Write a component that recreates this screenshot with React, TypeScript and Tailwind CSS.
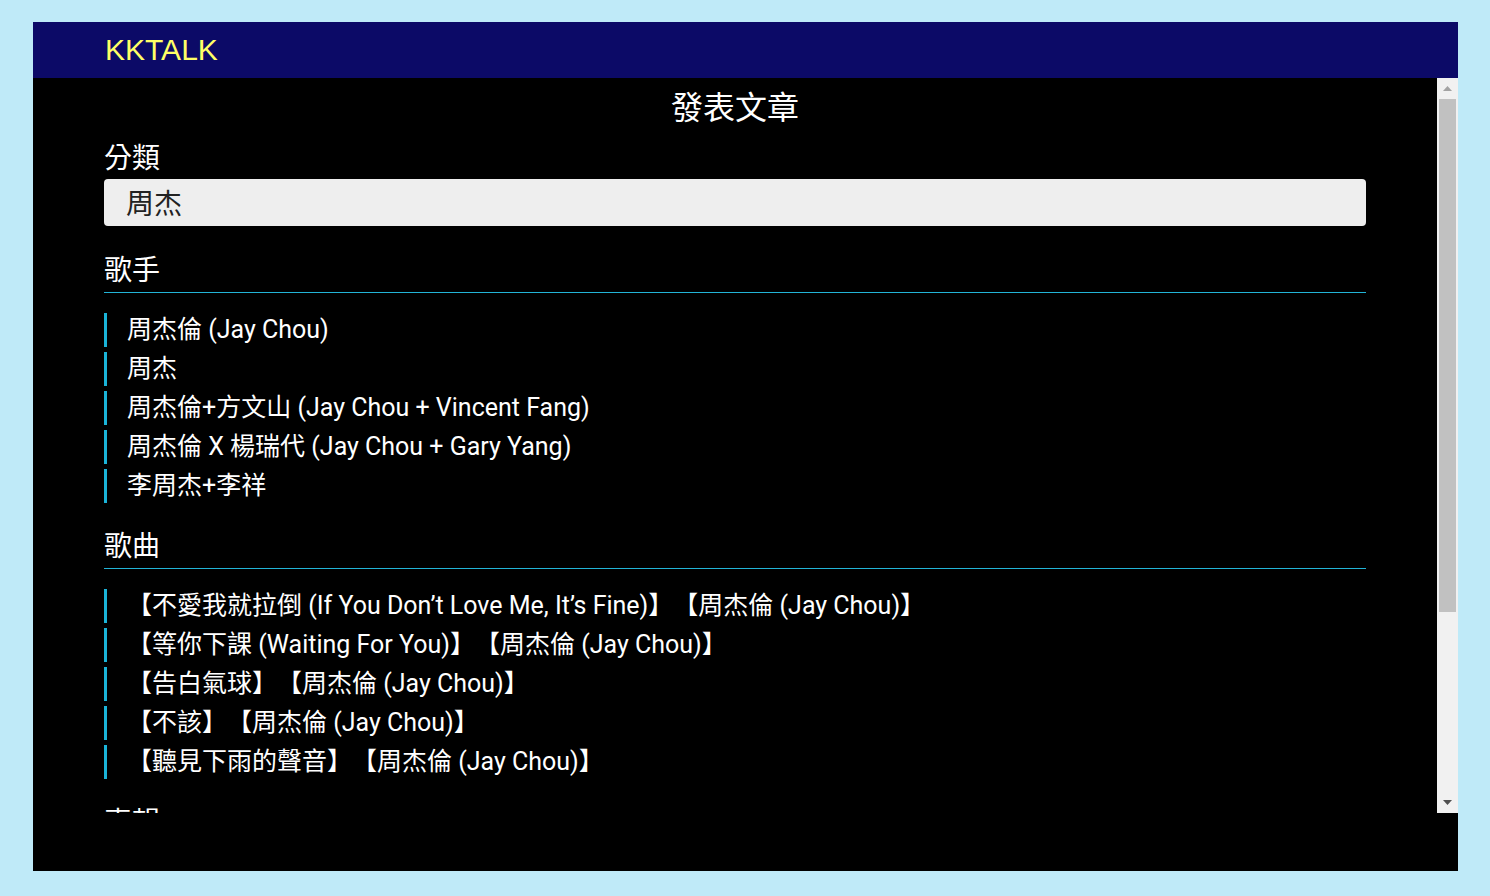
import React from "react";

const singers = [
  "周杰倫 (Jay Chou)",
  "周杰",
  "周杰倫+方文山 (Jay Chou + Vincent Fang)",
  "周杰倫 X 楊瑞代 (Jay Chou + Gary Yang)",
  "李周杰+李祥",
];

const songs = [
  "【不愛我就拉倒 (If You Don’t Love Me, It’s Fine)】【周杰倫 (Jay Chou)】",
  "【等你下課 (Waiting For You)】【周杰倫 (Jay Chou)】",
  "【告白氣球】【周杰倫 (Jay Chou)】",
  "【不該】【周杰倫 (Jay Chou)】",
  "【聽見下雨的聲音】【周杰倫 (Jay Chou)】",
];

function Section({ title, items, className }: { title: string; items: string[]; className?: string }) {
  return (
    <div className={className}>
      <h3 className="border-b border-[#22b4d6] pb-[3px] text-[28px] leading-[36px] font-normal">{title}</h3>
      {items.length > 0 ? (
        <ul className="mt-[20px] space-y-[5px]">
          {items.map((item) => (
            <li
              key={item}
              className="border-l-[3px] border-[#1ab3d8] pl-[20px] text-[25px] leading-[34px] whitespace-nowrap [text-spacing-trim:space-all]"
            >
              {item}
            </li>
          ))}
        </ul>
      ) : null}
    </div>
  );
}

// classic scrollbar, drawn by hand since the headless browser uses overlay ones
function Scrollbar() {
  return (
    <div className="flex w-[21px] shrink-0 flex-col bg-[#f1f1f1]">
      <div className="flex h-[21px] items-center justify-center">
        <svg width="9" height="5" viewBox="0 0 9 5">
          <path d="M4.5 0 L9 5 L0 5 Z" fill="#a3a3a3" />
        </svg>
      </div>
      <div className="flex flex-1 flex-col px-[2px]">
        <div className="h-[513px] bg-[#c1c1c1]" />
      </div>
      <div className="flex h-[21px] items-center justify-center">
        <svg width="9" height="5" viewBox="0 0 9 5">
          <path d="M0 0 L9 0 L4.5 5 Z" fill="#505050" />
        </svg>
      </div>
    </div>
  );
}

export default function App() {
  return (
    <div className="h-[896px] bg-[#bfeaf8] pl-[33px] pr-[32px] pt-[22px] font-['Roboto','Noto_Sans_CJK_TC',sans-serif]">
      <div className="flex h-[849px] flex-col">
        <header className="flex h-[56px] items-center bg-[#0c0a67] px-[72px]">
          <span className="font-['Liberation_Sans',Arial,sans-serif] text-[30px] leading-none text-[#ffff66]">KKTALK</span>
        </header>
        <main className="flex flex-1 flex-col bg-black text-white">
          <div className="flex h-[735px]">
            <div className="flex-1 overflow-hidden px-[71px]">
              <h2 className="pt-[7px] text-center text-[32px] leading-[46px] font-normal">發表文章</h2>
              <label className="mt-[10px] block text-[28px] leading-[36px]">分類</label>
              <div className="mt-[2px] flex h-[47px] items-center rounded-[4px] bg-[#eeeeee] pl-[22px] pt-[5px] text-[28px] text-[#222]">周杰</div>
              <Section className="mt-[27px]" title="歌手" items={singers} />
              <Section className="mt-[26px]" title="歌曲" items={songs} />
              <Section className="mt-[26px]" title="專輯" items={[]} />
            </div>
            <Scrollbar />
          </div>
          <div className="flex-1" />
        </main>
      </div>
    </div>
  );
}
